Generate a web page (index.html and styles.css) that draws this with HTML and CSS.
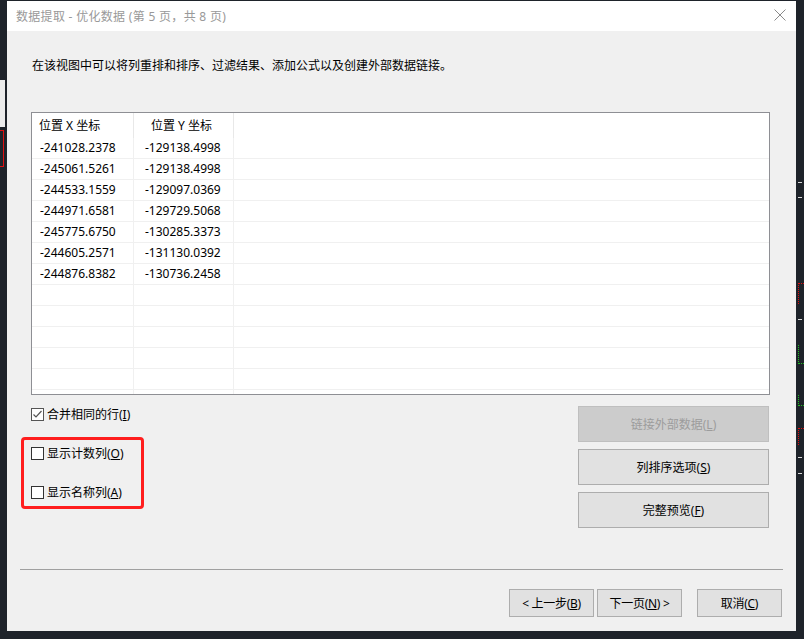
FILE: index.html
```html
<!DOCTYPE html>
<html>
<head>
    <title>数据提取 - 优化数据</title>
    <link rel="stylesheet" href="styles.css">
</head>
<body>
    <!-- desktop behind the dialog -->
    <div class="marks">
        <span class="mark pane-left"></span>
        <span class="mark red-bracket"></span>
        <span class="mark dash" style="top:182px"></span>
        <span class="mark dash" style="top:197px"></span>
        <span class="mark red-right" style="top:283px"></span>
        <span class="mark dash" style="top:319px"></span>
        <span class="mark green-right" style="top:345px"></span>
        <span class="mark green-right" style="top:395px; height:10px"></span>
        <span class="mark red-right" style="top:428px; height:16px"></span>
        <span class="mark dash" style="top:457px"></span>
        <span class="mark dash" style="top:473px"></span>
    </div>

    <div class="dialog">
        <div class="titlebar">
            <span class="title">数据提取 - 优化数据 (第 5 页，共 8 页)</span>
            <svg class="close" width="12" height="12" viewBox="0 0 12 12">
                <path d="M0.5 0.5 L11.5 11.5 M11.5 0.5 L0.5 11.5" stroke="#8a8a8a" stroke-width="1" fill="none"/>
            </svg>
        </div>

        <p class="intro">在该视图中可以将列重排和排序、过滤结果、添加公式以及创建外部数据链接。</p>

        <div class="grid-box">
            <div class="grid-head">
                <div class="cell c1">位置 X 坐标</div>
                <div class="cell c2">位置 Y 坐标</div>
                <div class="cell c3"></div>
            </div>
            <div class="grid-row"><div class="cell c1">-241028.2378</div><div class="cell c2">-129138.4998</div><div class="cell c3"></div></div>
            <div class="grid-row"><div class="cell c1">-245061.5261</div><div class="cell c2">-129138.4998</div><div class="cell c3"></div></div>
            <div class="grid-row"><div class="cell c1">-244533.1559</div><div class="cell c2">-129097.0369</div><div class="cell c3"></div></div>
            <div class="grid-row"><div class="cell c1">-244971.6581</div><div class="cell c2">-129729.5068</div><div class="cell c3"></div></div>
            <div class="grid-row"><div class="cell c1">-245775.6750</div><div class="cell c2">-130285.3373</div><div class="cell c3"></div></div>
            <div class="grid-row"><div class="cell c1">-244605.2571</div><div class="cell c2">-131130.0392</div><div class="cell c3"></div></div>
            <div class="grid-row"><div class="cell c1">-244876.8382</div><div class="cell c2">-130736.2458</div><div class="cell c3"></div></div>
            <div class="grid-row"><div class="cell c1"></div><div class="cell c2"></div><div class="cell c3"></div></div>
            <div class="grid-row"><div class="cell c1"></div><div class="cell c2"></div><div class="cell c3"></div></div>
            <div class="grid-row"><div class="cell c1"></div><div class="cell c2"></div><div class="cell c3"></div></div>
            <div class="grid-row"><div class="cell c1"></div><div class="cell c2"></div><div class="cell c3"></div></div>
            <div class="grid-row"><div class="cell c1"></div><div class="cell c2"></div><div class="cell c3"></div></div>
            <div class="grid-row"><div class="cell c1"></div><div class="cell c2"></div><div class="cell c3"></div></div>
        </div>

        <div class="lower">
            <div class="options">
                <label class="check merge">
                    <span class="box checked">
                        <svg width="11" height="11" viewBox="0 0 11 11">
                            <path d="M1.5 5.5 L4 8 L9.5 2" stroke="#555" stroke-width="1.2" fill="none"/>
                        </svg>
                    </span>
                    <span>合并相同的行(<u>I</u>)</span>
                </label>
                <div class="highlight">
                    <label class="check">
                        <span class="box"></span>
                        <span>显示计数列(<u>O</u>)</span>
                    </label>
                    <label class="check">
                        <span class="box"></span>
                        <span>显示名称列(<u>A</u>)</span>
                    </label>
                </div>
            </div>
            <div class="actions">
                <button class="btn side" disabled>链接外部数据(<u>L</u>)</button>
                <button class="btn side">列排序选项(<u>S</u>)</button>
                <button class="btn side">完整预览(<u>F</u>)</button>
            </div>
        </div>

        <div class="sep"></div>

        <div class="footer">
            <button class="btn nav">&lt; 上一步(<u>B</u>)</button>
            <button class="btn nav">下一页(<u>N</u>) &gt;</button>
            <button class="btn nav cancel">取消(<u>C</u>)</button>
        </div>
    </div>
</body>
</html>
```

FILE: styles.css
```css
body {
    margin: 0;
    width: 804px;
    height: 639px;
    overflow: hidden;
    position: relative;
    background: #1e232a;
    font-family: "Noto Sans", "Noto Sans CJK SC", sans-serif;
    font-size: 12px;
    color: #000;
}

/* bits of the drawing behind the window */
.mark {
    position: absolute;
    display: block;
}

.pane-left {
    left: 0;
    top: 80px;
    width: 5px;
    height: 47px;
    background: #ececec;
}

.red-bracket {
    left: 0;
    top: 130px;
    width: 3px;
    height: 35px;
    border: 1px solid #e01010;
    border-left: none;
}

.dash {
    right: 2px;
    width: 4px;
    height: 1px;
    background: #d8d8d8;
}

.red-right {
    right: 0;
    width: 5px;
    height: 20px;
    border-left: 1px dotted #e01010;
    border-top: 1px dotted #e01010;
}

.green-right {
    right: 0;
    width: 5px;
    height: 18px;
    border-left: 1px dotted #20c020;
    border-bottom: 1px dotted #20c020;
}

.dialog {
    position: relative;
    margin: 1px 0 0 7px;
    width: 789px;
    height: 630px;
    background: #f0f0f0;
    display: flex;
    flex-direction: column;
}

.titlebar {
    height: 30px;
    flex-shrink: 0;
    background: #fff;
    display: flex;
    align-items: center;
    justify-content: space-between;
    padding: 0 10px 0 9px;
    color: #999;
    font-size: 12px;
}

.title {
    letter-spacing: 0.3px;
}

.close {
    margin-top: -2px;
}

.intro {
    margin: 27px 0 0 25px;
    line-height: 16px;
}

.grid-box {
    margin: 38px 0 0 24px;
    width: 739px;
    height: 283px;
    flex-shrink: 0;
    box-sizing: border-box;
    border: 1px solid #8e8f94;
    background: #fff;
    overflow: hidden;
}

.grid-head,
.grid-row {
    display: flex;
}

.grid-head {
    height: 25px;
}

.grid-row {
    height: 21px;
    box-sizing: border-box;
    border-bottom: 1px solid #f0f0f0;
}

.cell {
    box-sizing: border-box;
    border-right: 1px solid #f0f0f0;
    white-space: nowrap;
}

.grid-head .cell {
    line-height: 25px;
    border-right-color: #e8e8e8;
}

.grid-row .cell {
    line-height: 20px;
}

.c1 {
    width: 102px;
    padding-left: 8px;
}

.grid-head .c1 {
    padding-left: 7px;
}

.c2 {
    width: 100px;
    padding-left: 11px;
}

.grid-head .c2 {
    padding: 0 4px 0 0;
    text-align: center;
}

.c3 {
    flex: 1;
    border-right: none;
}

.lower {
    display: flex;
    justify-content: space-between;
    margin: 11px 27px 0 14px;
}

.check {
    display: flex;
    align-items: center;
    gap: 3px;
    height: 13px;
    line-height: 13px;
}

.check.merge {
    margin: 2px 0 0 10px;
}

.box {
    width: 13px;
    height: 13px;
    box-sizing: border-box;
    border: 1px solid #333;
    background: #fff;
    display: flex;
    align-items: center;
    justify-content: center;
}

.box.checked {
    border-color: #555;
}

.highlight {
    margin-top: 16px;
    width: 123px;
    height: 72px;
    box-sizing: border-box;
    border: 3px solid #ff1e1e;
    border-radius: 4px;
    padding: 7px 0 0 7px;
    display: flex;
    flex-direction: column;
    gap: 26px;
}

.actions {
    display: flex;
    flex-direction: column;
    gap: 7px;
}

.btn {
    font-family: "Noto Sans", "Noto Sans CJK SC", sans-serif;
    font-size: 12px;
    color: #000;
    background: #e1e1e1;
    border: 1px solid #adadad;
    padding: 0;
    cursor: pointer;
}

.btn:disabled {
    background: #cccccc;
    border-color: #bfbfbf;
    color: #9c9c9c;
    cursor: default;
}

.side {
    width: 191px;
    height: 36px;
}

.sep {
    margin: 41px 13px 0 13px;
    height: 1px;
    background: #a0a0a0;
}

.footer {
    display: flex;
    justify-content: flex-end;
    gap: 3px;
    margin: 19px 14px 0 0;
}

.nav {
    width: 85px;
    height: 28px;
    letter-spacing: -0.3px;
}

.nav.cancel {
    margin-left: 12px;
}
```
